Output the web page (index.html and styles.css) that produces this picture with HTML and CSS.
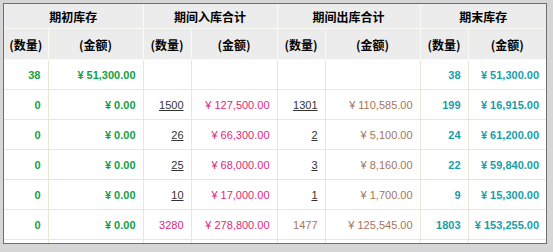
FILE: index.html
```html
<!DOCTYPE html>
<html lang="zh-CN">
<head>
	<meta charset="UTF-8">
	<title>库存汇总</title>
	<link rel="stylesheet" href="styles.css">
</head>
<body>
	<div class="frame">
		<table class="stock">
			<colgroup>
				<col style="width:44px"><col style="width:95px">
				<col style="width:48px"><col style="width:86px">
				<col style="width:48px"><col style="width:95px">
				<col style="width:48px"><col style="width:78px">
			</colgroup>
			<thead>
				<tr class="title-row">
					<th colspan="2">期初库存</th>
					<th colspan="2">期间入库合计</th>
					<th colspan="2">期间出库合计</th>
					<th colspan="2">期末库存</th>
				</tr>
				<tr class="sub-row">
					<th>(数量)</th><th>(金额)</th>
					<th>(数量)</th><th>(金额)</th>
					<th>(数量)</th><th>(金额)</th>
					<th>(数量)</th><th>(金额)</th>
				</tr>
			</thead>
			<tbody>
				<tr>
					<td class="start">38</td><td class="start">¥ 51,300.00</td>
					<td></td><td></td>
					<td></td><td></td>
					<td class="end">38</td><td class="end">¥ 51,300.00</td>
				</tr>
				<tr>
					<td class="start">0</td><td class="start">¥ 0.00</td>
					<td><a href="#">1500</a></td><td class="in">¥ 127,500.00</td>
					<td><a href="#">1301</a></td><td class="out">¥ 110,585.00</td>
					<td class="end">199</td><td class="end">¥ 16,915.00</td>
				</tr>
				<tr>
					<td class="start">0</td><td class="start">¥ 0.00</td>
					<td><a href="#">26</a></td><td class="in">¥ 66,300.00</td>
					<td><a href="#">2</a></td><td class="out">¥ 5,100.00</td>
					<td class="end">24</td><td class="end">¥ 61,200.00</td>
				</tr>
				<tr>
					<td class="start">0</td><td class="start">¥ 0.00</td>
					<td><a href="#">25</a></td><td class="in">¥ 68,000.00</td>
					<td><a href="#">3</a></td><td class="out">¥ 8,160.00</td>
					<td class="end">22</td><td class="end">¥ 59,840.00</td>
				</tr>
				<tr>
					<td class="start">0</td><td class="start">¥ 0.00</td>
					<td><a href="#">10</a></td><td class="in">¥ 17,000.00</td>
					<td><a href="#">1</a></td><td class="out">¥ 1,700.00</td>
					<td class="end">9</td><td class="end">¥ 15,300.00</td>
				</tr>
				<tr>
					<td class="start">0</td><td class="start">¥ 0.00</td>
					<td class="in">3280</td><td class="in">¥ 278,800.00</td>
					<td class="out">1477</td><td class="out">¥ 125,545.00</td>
					<td class="end">1803</td><td class="end">¥ 153,255.00</td>
				</tr>
				<tr>
					<td></td><td></td><td></td><td></td>
					<td></td><td></td><td></td><td></td>
				</tr>
			</tbody>
		</table>
	</div>
</body>
</html>
```

FILE: styles.css
```css
body{
	margin: 0;
	background-color: #d6d6d6;
	font-family: "Liberation Sans", Arial, "Noto Sans CJK SC", sans-serif;
	font-size: 11px;
}

.frame{
	margin: 3px 0 0 3px;
	width: 542px;
	height: 239px;
	border: 1px solid #6e6e6e;
	background-color: #fff;
	overflow: hidden;
}

.stock{
	border-collapse: collapse;
	table-layout: fixed;
	width: 542px;
}

.stock th{
	background-color: #ececec;
	border: 1px solid #fafaf4;
	color: #000;
	font-weight: bold;
	font-family: "Noto Sans CJK SC", sans-serif;
	font-size: 12px;
	text-align: center;
	padding: 0;
}

.stock thead tr:first-child th{
	border-top: none;
}

.title-row th{
	height: 24px;
}

.sub-row th{
	height: 30px;
}

.stock td{
	height: 29px;
	border: 1px solid #ebe7d6;
	text-align: right;
	padding: 0 7px 0 0;
	white-space: nowrap;
}

.stock tr th:first-child,
.stock tr td:first-child{
	border-left: none;
}

.stock tr th:last-child,
.stock tr td:last-child{
	border-right: none;
}

.stock a{
	color: #333;
}

.start{
	color: #14a040;
	font-weight: bold;
}

.end{
	color: #17a0a8;
	font-weight: bold;
}

.in{
	color: #e0287c;
}

.out{
	color: #a4755c;
}
```
